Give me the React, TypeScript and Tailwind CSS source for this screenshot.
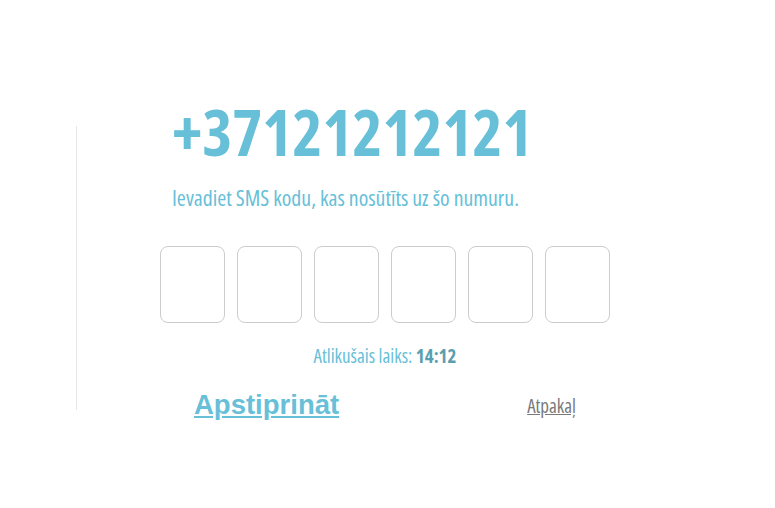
import React from "react";

const narrow = { fontFamily: '"Open Sans", Roboto, sans-serif' };

export default function App() {
  return (
    <div className="w-[775px] h-[508px] bg-white flex font-stretch-[75%]" style={narrow}>
      <div className="ml-[76px] mt-[126px] w-px h-[284px] bg-[#e5e7eb] shrink-0" />
      <div className="w-[616px] pt-[94px] flex flex-col">
        <div className="pl-[95px] text-[64px] leading-[76px] font-bold text-[#67bfd8]">+37121212121</div>
        <div className="pl-[95px] mt-[15px] text-[21.8px] leading-[26px] text-[#67bfd8]">Ievadiet SMS kodu, kas nosūtīts uz šo numuru.</div>
        <div className="mt-[35px] flex justify-center gap-[12px]">
          {[0, 1, 2, 3, 4, 5].map((i) => (
            <div key={i} className="w-[65px] h-[77px] border border-[#cccccc] rounded-[8px] bg-white" />
          ))}
        </div>
        <div className="mt-[21px] text-center text-[19px] leading-[24px] text-[#67bfd8]">
          Atlikušais laiks: <span className="font-bold text-[#5a9fb0]">14:12</span>
        </div>
        <div className="mt-[21px] flex items-end">
          <a href="#" className="ml-[117px] text-[27.5px] leading-[32px] font-bold text-[#67bfd8] underline font-stretch-normal" style={{ fontFamily: '"Liberation Sans", Arial, sans-serif' }}>Apstiprināt</a>
          <a href="#" className="ml-[188px] mb-[4px] text-[19px] leading-[22px] text-[#7a7a7a] underline">Atpakaļ</a>
        </div>
      </div>
    </div>
  );
}
